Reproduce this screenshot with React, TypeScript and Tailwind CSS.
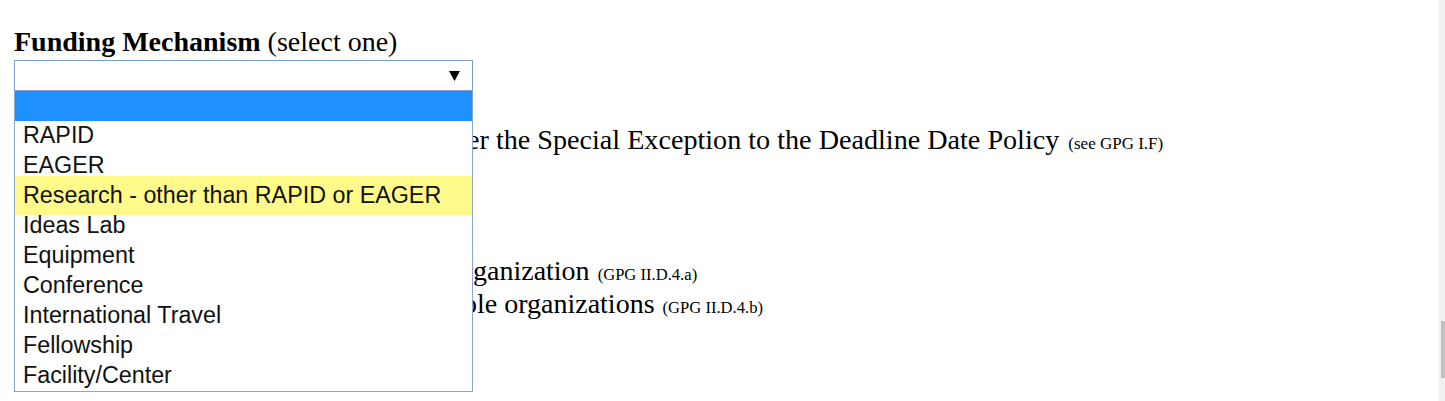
import React from "react";

const options = [
  "RAPID",
  "EAGER",
  "Research - other than RAPID or EAGER",
  "Ideas Lab",
  "Equipment",
  "Conference",
  "International Travel",
  "Fellowship",
  "Facility/Center",
];

export default function App() {
  return (
    <div className="flex h-[401px] w-[1445px] overflow-hidden bg-white">
      <div className="relative flex-1 pl-[14px] pt-[27px] font-['Liberation_Serif',serif] text-black">
        <div className="h-[33px] text-[28px] leading-[30px] whitespace-nowrap">
          <span className="font-bold">Funding Mechanism</span> (select one)
        </div>
        <div className="relative z-10 w-[459px]">
          <div className="flex h-[31px] items-center justify-end border border-[#7c9dc9] bg-white pr-[12px]">
            <svg width="11" height="10" viewBox="0 0 11 10">
              <polygon points="0,0 11,0 5.5,10" fill="#000" />
            </svg>
          </div>
          <div className="absolute left-0 top-full w-full border border-t-0 border-[#8aa6cf] bg-white font-['Liberation_Sans',Arial,sans-serif] text-[23.3px] text-[#111]">
            <div className="h-[30px] bg-[#1e90ff]" />
            {options.map((o) => (
              <div
                key={o}
                className={
                  "flex h-[30px] items-center whitespace-nowrap pb-[1px] pl-[8px] " +
                  (o.startsWith("Research")
                    ? "bg-[#fffa8a] shadow-[0_-5px_0_#fffa8a,0_4px_0_#fffa8a]"
                    : "")
                }
              >
                {o}
              </div>
            ))}
          </div>
        </div>
        <div className="mt-[33px] flex h-[32px] items-baseline whitespace-nowrap text-[28.15px] leading-[32px]">
          <span className="w-[453px] shrink-0 text-right">submitted und</span>
          <span>er the Special Exception to the Deadline Date Policy</span>
          <span className="ml-[9px] text-[17px]">(see GPG I.F)</span>
        </div>
        <div className="mt-[99px] flex h-[32px] items-baseline whitespace-nowrap text-[28px] leading-[32px]">
          <span className="w-[459px] shrink-0 text-right">from one or</span>
          <span>ganization</span>
          <span className="ml-[8px] text-[16.6px]">(GPG II.D.4.a)</span>
        </div>
        <div className="flex h-[33px] items-baseline whitespace-nowrap pt-[1px] text-[28px] leading-[32px]">
          <span className="w-[463px] shrink-0 text-right">from multip</span>
          <span>le organizations</span>
          <span className="ml-[8px] text-[16.6px]">(GPG II.D.4.b)</span>
        </div>
      </div>
      <div className="flex w-[6px] flex-col bg-[#f0f0f0] pt-[321px]">
        <div className="ml-[2px] h-[57px] w-[4px] bg-[#c1c1c1]" />
      </div>
    </div>
  );
}
